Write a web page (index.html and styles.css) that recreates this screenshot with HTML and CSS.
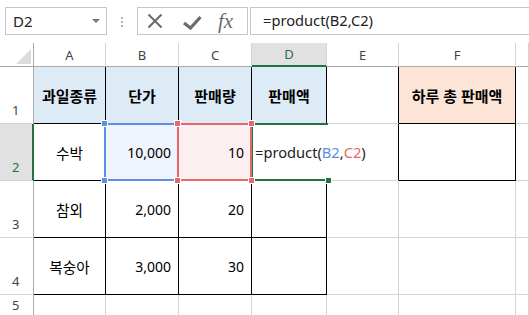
FILE: index.html
```html
<!DOCTYPE html>
<html lang="ko">

<head>
    <meta charset="UTF-8">
    <title>판매액</title>
    <link rel="stylesheet" href="styles.css">
</head>

<body>

    <div class="formula-bar">
        <div class="name-box"><span>D2</span><span class="caret"></span></div>
        <div class="grip"><i></i><i></i><i></i></div>
        <div class="fx-tools">
            <svg class="tool-x" width="16" height="16" viewBox="0 0 16 16">
                <path d="M1.5 1.5 L14.5 14.5 M14.5 1.5 L1.5 14.5" stroke="#6b6b6b" stroke-width="2" fill="none" />
            </svg>
            <svg class="tool-ok" width="19" height="15" viewBox="0 0 19 15">
                <path d="M1 8 L7.5 13 L17.5 2" stroke="#6b6b6b" stroke-width="3.2" fill="none" />
            </svg>
            <span class="tool-fx">fx</span>
        </div>
        <div class="formula-input">=product(B2,C2)</div>
    </div>

    <div class="sheet">
        <!-- column headers -->
        <div class="cell corner"><div class="tri"></div></div>
        <div class="cell col-hd">A</div>
        <div class="cell col-hd">B</div>
        <div class="cell col-hd">C</div>
        <div class="cell col-hd sel">D</div>
        <div class="cell col-hd">E</div>
        <div class="cell col-hd">F</div>
        <div class="cell col-hd"></div>

        <!-- row 1 -->
        <div class="cell row-hd">1</div>
        <div class="cell tb hd">과일종류</div>
        <div class="cell tb hd">단가</div>
        <div class="cell tb hd">판매량</div>
        <div class="cell tb hd">판매액</div>
        <div class="cell edge"></div>
        <div class="cell tb hd total">하루 총 판매액</div>
        <div class="cell"></div>

        <!-- row 2 -->
        <div class="cell row-hd sel">2</div>
        <div class="cell tb txt">수박</div>
        <div class="cell tb num ref-b">10,000<div class="ref"><i class="h tl"></i><i class="h tr"></i><i class="h bl"></i><i class="h br"></i></div></div>
        <div class="cell tb num ref-c">10<div class="ref"><i class="h tl"></i><i class="h tr"></i><i class="h bl"></i><i class="h br"></i></div></div>
        <div class="cell tb active">=product(<span class="blue">B2</span>,<span class="red">C2</span>)<div class="ref"><i class="fill"></i></div></div>
        <div class="cell edge"></div>
        <div class="cell tb"></div>
        <div class="cell"></div>

        <!-- row 3 -->
        <div class="cell row-hd">3</div>
        <div class="cell tb txt">참외</div>
        <div class="cell tb num">2,000</div>
        <div class="cell tb num">20</div>
        <div class="cell tb"></div>
        <div class="cell"></div>
        <div class="cell"></div>
        <div class="cell"></div>

        <!-- row 4 -->
        <div class="cell row-hd">4</div>
        <div class="cell tb txt">복숭아</div>
        <div class="cell tb num">3,000</div>
        <div class="cell tb num">30</div>
        <div class="cell tb"></div>
        <div class="cell"></div>
        <div class="cell"></div>
        <div class="cell"></div>

        <!-- row 5 -->
        <div class="cell row-hd last">5</div>
        <div class="cell"></div>
        <div class="cell"></div>
        <div class="cell"></div>
        <div class="cell"></div>
        <div class="cell"></div>
        <div class="cell"></div>
        <div class="cell"></div>
    </div>

</body>

</html>
```

FILE: styles.css
```css
body {
    margin: 0;
    background: #fff;
    font-family: "Noto Sans", "Noto Sans CJK KR", sans-serif;
    overflow: hidden;
}

/* formula bar */
.formula-bar {
    height: 43px;
    box-sizing: border-box;
    padding: 7px 0 0 5px;
    display: flex;
    align-items: flex-start;
}

.name-box {
    width: 102px;
    height: 28px;
    box-sizing: border-box;
    border: 1px solid #c6c6c6;
    display: flex;
    align-items: center;
    justify-content: space-between;
    padding: 0 6px 0 7px;
    font-size: 15px;
    color: #222;
}

.caret {
    width: 0;
    height: 0;
    border-left: 4px solid transparent;
    border-right: 4px solid transparent;
    border-top: 4px solid #777;
}

.grip {
    display: flex;
    flex-direction: column;
    gap: 2px;
    margin: 10px 14px 0 14px;
}

.grip i {
    width: 2px;
    height: 2px;
    background: #b4b4b4;
}

.fx-tools {
    width: 111px;
    height: 28px;
    box-sizing: border-box;
    border: 1px solid #c6c6c6;
    display: flex;
    align-items: center;
    padding-left: 9px;
}

.tool-ok {
    margin-left: 20px;
    margin-top: 2px;
}

.tool-fx {
    margin-left: 16px;
    font-family: "Liberation Serif", serif;
    font-style: italic;
    font-size: 21px;
    color: #6b6b6b;
    line-height: 1;
}

.formula-input {
    flex: 1;
    height: 28px;
    margin-left: 2px;
    box-sizing: border-box;
    border: 1px solid #c6c6c6;
    border-right: none;
    padding-left: 12px;
    font-size: 14.67px;
    line-height: 25px;
    color: #222;
}

/* sheet grid */
.sheet {
    display: grid;
    grid-template-columns: 34px 72px 73px 73px 75px 72px 117px 1fr;
    grid-template-rows: 24px 57px 57px 57px 57px 21px;
}

.cell {
    box-sizing: border-box;
    border-right: 1px solid #d4d4d4;
    border-bottom: 1px solid #d4d4d4;
    display: flex;
    align-items: center;
    font-size: 14.67px;
    color: #000;
    white-space: nowrap;
    position: relative;
}

.corner {
    border-right-color: #ababab;
    border-bottom-color: #ababab;
    justify-content: flex-end;
    align-items: flex-end;
    padding: 0 2px 2px 0;
}

.tri {
    width: 15px;
    height: 15px;
    background: #dcdcdc;
    clip-path: polygon(100% 0, 100% 100%, 0 100%);
}

.col-hd {
    justify-content: center;
    border-bottom-color: #ababab;
    font-size: 13px;
    color: #444;
}

.col-hd.sel {
    background: #e1e1e1;
    border-bottom: 2px solid #217346;
    color: #217346;
}

.row-hd {
    border-right-color: #ababab;
    align-items: flex-end;
    padding: 0 0 4px 12px;
    font-size: 13px;
    color: #444;
}

.row-hd.sel {
    background: #e1e1e1;
    border-right: 2px solid #217346;
    color: #217346;
}

.row-hd.last {
    padding-bottom: 1px;
}

.tb {
    border-right-color: #000;
    border-bottom-color: #000;
}

.edge {
    border-right-color: #000;
}

.hd {
    justify-content: center;
    background: #ddebf7;
    font-weight: bold;
    font-size: 15px;
}

.total {
    background: #fce4d6;
}

.txt {
    justify-content: center;
}

.num {
    justify-content: flex-end;
    padding-right: 7px;
    font-size: 14px;
}

/* reference highlights */
.ref {
    position: absolute;
    top: -1px;
    right: -1px;
    bottom: -1px;
    left: -2px;
    border: 2px solid;
}

.ref-b {
    background: #eef3fc;
}

.ref-b .ref {
    border-color: #5e8fe6;
    z-index: 2;
}

.ref-c {
    background: #fcefef;
}

.ref-c .ref {
    border-color: #e7686b;
    z-index: 3;
}

.h {
    position: absolute;
    width: 5px;
    height: 5px;
    border: 1px solid #fff;
}

.ref-b .h {
    background: #5e8fe6;
}

.ref-c .h {
    background: #e7686b;
}

.tl {
    top: -5px;
    left: -5px;
}

.tr {
    top: -5px;
    right: -5px;
}

.bl {
    bottom: -5px;
    left: -5px;
}

.br {
    bottom: -5px;
    right: -5px;
}

.active {
    border-right: none;
    padding-left: 3px;
    color: #222;
}

.active .ref {
    left: -1px;
    border-color: #217346;
    border-right: none;
    z-index: 1;
}

.fill {
    position: absolute;
    right: -4px;
    bottom: -5px;
    width: 5px;
    height: 5px;
    background: #217346;
    border: 1px solid #fff;
}

.blue {
    color: #5e8fe6;
}

.red {
    color: #e7686b;
}
```
